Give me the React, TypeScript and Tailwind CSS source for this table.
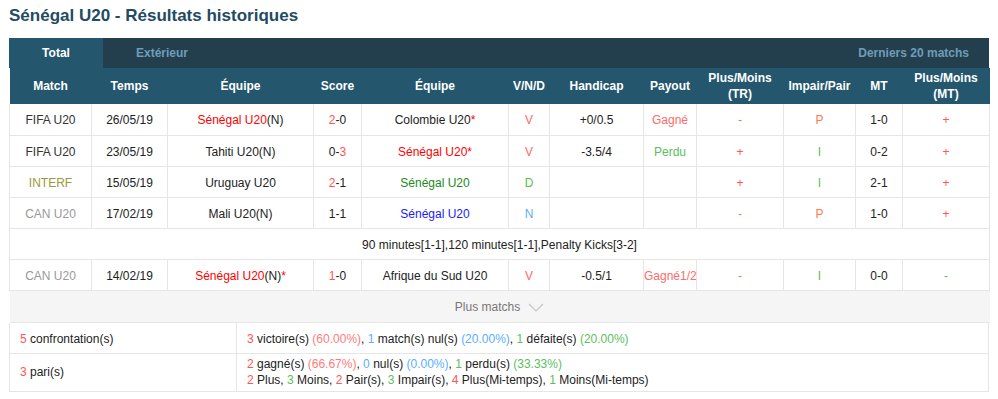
import React from "react";

const RED = "text-[#ff0000]";
const LRED = "text-[#f55]";
const GREEN = "text-[#5cc05c]";
const BLUE = "text-[#5aaefc]";

type Row = {
  league: string;
  leagueColor: string;
  date: string;
  home: React.ReactNode;
  score: React.ReactNode;
  away: React.ReactNode;
  res: React.ReactNode;
  hcp: string;
  payout: React.ReactNode;
  ou: React.ReactNode;
  oe: React.ReactNode;
  ht: string;
  ouHt: React.ReactNode;
};

const plus = <span className={LRED}>+</span>;
const minus = <span className={GREEN}>-</span>;
const P = <span className="text-[#ff7a4d]">P</span>;
const I = <span className={GREEN}>I</span>;

const rows: Row[] = [
  {
    league: "FIFA U20",
    leagueColor: "text-[#333]",
    date: "26/05/19",
    home: <><span className={RED}>Sénégal U20</span>(N)</>,
    score: <><span className={LRED}>2</span>-0</>,
    away: <>Colombie U20<span className={RED}>*</span></>,
    res: <span className="text-[#ff6a6a]">V</span>,
    hcp: "+0/0.5",
    payout: <span className="text-[#ff6a6a]">Gagné</span>,
    ou: minus,
    oe: P,
    ht: "1-0",
    ouHt: plus,
  },
  {
    league: "FIFA U20",
    leagueColor: "text-[#333]",
    date: "23/05/19",
    home: <>Tahiti U20(N)</>,
    score: <>0-<span className={LRED}>3</span></>,
    away: <span className={RED}>Sénégal U20*</span>,
    res: <span className="text-[#ff6a6a]">V</span>,
    hcp: "-3.5/4",
    payout: <span className={GREEN}>Perdu</span>,
    ou: plus,
    oe: I,
    ht: "0-2",
    ouHt: plus,
  },
  {
    league: "INTERF",
    leagueColor: "text-[#9a9a3a]",
    date: "15/05/19",
    home: <>Uruguay U20</>,
    score: <><span className={LRED}>2</span>-1</>,
    away: <span className="text-[#1a8a1a]">Sénégal U20</span>,
    res: <span className="text-[#55c040]">D</span>,
    hcp: "",
    payout: "",
    ou: plus,
    oe: I,
    ht: "2-1",
    ouHt: plus,
  },
  {
    league: "CAN U20",
    leagueColor: "text-[#999]",
    date: "17/02/19",
    home: <>Mali U20(N)</>,
    score: <>1-1</>,
    away: <span className="text-[#1a1aff]">Sénégal U20</span>,
    res: <span className={BLUE}>N</span>,
    hcp: "",
    payout: "",
    ou: minus,
    oe: P,
    ht: "1-0",
    ouHt: plus,
  },
];

const lastRow: Row = {
  league: "CAN U20",
  leagueColor: "text-[#999]",
  date: "14/02/19",
  home: <><span className={RED}>Sénégal U20</span>(N)<span className={RED}>*</span></>,
  score: <><span className={LRED}>1</span>-0</>,
  away: <>Afrique du Sud U20</>,
  res: <span className="text-[#ff6a6a]">V</span>,
  hcp: "-0.5/1",
  payout: <span className="text-[#ff6a6a]">Gagné1/2</span>,
  ou: minus,
  oe: I,
  ht: "0-0",
  ouHt: minus,
};

const widths = [82, 76, 146, 48, 147, 41, 94, 53, 87, 72, 47, 87];

const td = "border-r border-b border-[#e6e6e6] text-center whitespace-nowrap px-0 pt-[2px]";

function MatchRow({ r }: { r: Row }) {
  return (
    <tr className="h-[31px] bg-white">
      <td className={`${td} border-l ${r.leagueColor}`}>{r.league}</td>
      <td className={td}>{r.date}</td>
      <td className={td}>{r.home}</td>
      <td className={td}>{r.score}</td>
      <td className={td}>{r.away}</td>
      <td className={td}>{r.res}</td>
      <td className={td}>{r.hcp}</td>
      <td className={td}>{r.payout}</td>
      <td className={td}>{r.ou}</td>
      <td className={td}>{r.oe}</td>
      <td className={td}>{r.ht}</td>
      <td className={td}>{r.ouHt}</td>
    </tr>
  );
}

export default function App() {
  return (
    <div className="w-[998px] h-[399px] bg-white font-['Liberation_Sans',Arial,sans-serif] text-[12px] text-[#222]">
      <h1 className="pl-[9px] pt-[3px] h-[38px] text-[17px] font-bold text-[#1f4b63]">
        Sénégal U20 - Résultats historiques
      </h1>
      <div className="ml-[9px] w-[980px]">
        <div className="flex h-[30px] bg-[#233f4e] text-[12px] font-bold items-center">
          <div className="w-[94px] h-full bg-[#24566e] text-white flex items-center justify-center">Total</div>
          <div className="w-[118px] text-center text-[#6f9cb6]">Extérieur</div>
          <div className="flex-1 text-right pr-[20px] text-[#6f9cb6]">Derniers 20 matchs</div>
        </div>
        <table className="table-fixed border-collapse w-[980px]">
          <colgroup>
            {widths.map((w, i) => (
              <col key={i} style={{ width: w }} />
            ))}
          </colgroup>
          <thead>
            <tr className="h-[36px] bg-[#24566e] text-white font-bold leading-[16px]">
              <th>Match</th>
              <th>Temps</th>
              <th>Équipe</th>
              <th>Score</th>
              <th>Équipe</th>
              <th>V/N/D</th>
              <th>Handicap</th>
              <th>Payout</th>
              <th>Plus/Moins<br />(TR)</th>
              <th>Impair/Pair</th>
              <th>MT</th>
              <th>Plus/Moins<br />(MT)</th>
            </tr>
          </thead>
          <tbody>
            {rows.map((r, i) => (
              <MatchRow key={i} r={r} />
            ))}
            <tr className="h-[31px] bg-white">
              <td colSpan={12} className="border-l border-r border-b border-[#e6e6e6] text-center pt-[2px]">
                90 minutes[1-1],120 minutes[1-1],Penalty Kicks[3-2]
              </td>
            </tr>
            <MatchRow r={lastRow} />
            <tr className="h-[32px] bg-[#f5f5f5]">
              <td colSpan={12} className="border-b border-[#e6e6e6] text-center text-[#777] pt-[2px]">
                <span className="inline-flex items-center gap-[8px]">
                  Plus matchs
                  <svg width="16" height="9" viewBox="0 0 16 9" fill="none">
                    <path d="M1 1l7 7 7-7" stroke="#c4c4c4" strokeWidth="1.2" />
                  </svg>
                </span>
              </td>
            </tr>
          </tbody>
        </table>
        <div className="flex border-l border-r border-b border-[#e6e6e6] h-[31px] items-center">
          <div className="w-[227px] h-full border-r border-[#e6e6e6] pl-[10px] pt-[2px] flex items-center">
            <span><span className={LRED}>5</span> confrontation(s)</span>
          </div>
          <div className="pl-[10px] pt-[2px]">
            <span className={LRED}>3</span> victoire(s) <span className="text-[#ff7b7b]">(60.00%)</span>,{" "}
            <span className={BLUE}>1</span> match(s) nul(s) <span className={BLUE}>(20.00%)</span>,{" "}
            <span className={GREEN}>1</span> défaite(s) <span className={GREEN}>(20.00%)</span>
          </div>
        </div>
        <div className="flex border-l border-r border-b border-[#e6e6e6] h-[38px]">
          <div className="w-[227px] border-r border-[#e6e6e6] pl-[10px] flex items-center">
            <span><span className={LRED}>3</span> pari(s)</span>
          </div>
          <div className="pl-[10px] flex flex-col justify-center leading-[16px]">
            <div>
              <span className={LRED}>2</span> gagné(s) <span className="text-[#ff7b7b]">(66.67%)</span>,{" "}
              <span className={BLUE}>0</span> nul(s) <span className={BLUE}>(0.00%)</span>,{" "}
              <span className={GREEN}>1</span> perdu(s) <span className={GREEN}>(33.33%)</span>
            </div>
            <div>
              <span className={LRED}>2</span> Plus, <span className={GREEN}>3</span> Moins,{" "}
              <span className={LRED}>2</span> Pair(s), <span className={GREEN}>3</span> Impair(s),{" "}
              <span className={LRED}>4</span> Plus(Mi-temps), <span className={GREEN}>1</span> Moins(Mi-temps)
            </div>
          </div>
        </div>
      </div>
    </div>
  );
}
